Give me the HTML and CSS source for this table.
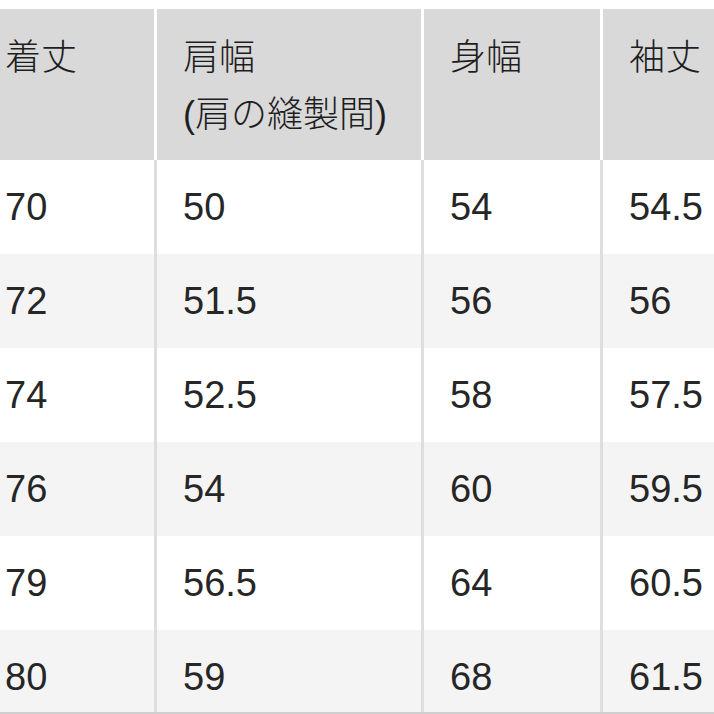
FILE: index.html
```html
<!DOCTYPE html>
<html lang="ja">
<head>
<meta charset="utf-8">
<link rel="stylesheet" href="styles.css">
</head>
<body>
<div class="sheet">
  <div class="row head">
    <div class="cell">着丈</div>
    <div class="cell">肩幅<br>(肩の縫製間)</div>
    <div class="cell">身幅</div>
    <div class="cell">袖丈</div>
  </div>
  <div class="row">
    <div class="cell">70</div><div class="cell">50</div><div class="cell">54</div><div class="cell">54.5</div>
  </div>
  <div class="row alt">
    <div class="cell">72</div><div class="cell">51.5</div><div class="cell">56</div><div class="cell">56</div>
  </div>
  <div class="row">
    <div class="cell">74</div><div class="cell">52.5</div><div class="cell">58</div><div class="cell">57.5</div>
  </div>
  <div class="row alt">
    <div class="cell">76</div><div class="cell">54</div><div class="cell">60</div><div class="cell">59.5</div>
  </div>
  <div class="row">
    <div class="cell">79</div><div class="cell">56.5</div><div class="cell">64</div><div class="cell">60.5</div>
  </div>
  <div class="row alt last">
    <div class="cell">80</div><div class="cell">59</div><div class="cell">68</div><div class="cell">61.5</div>
  </div>
</div>
</body>
</html>
```

FILE: styles.css
```css
html, body {
  margin: 0;
  padding: 0;
  background: #ffffff;
}
body {
  width: 714px;
  height: 714px;
  overflow: hidden;
  font-family: "Liberation Sans", "Noto Sans CJK JP", sans-serif;
  color: #262626;
}
.sheet {
  padding-top: 9px;
  width: 714px;
}
.row {
  display: grid;
  grid-template-columns: 154px 267px 179px 114px;
  height: 94px;
  background: #ffffff;
}
.row.alt {
  background: #f4f4f4;
}
.row.last {
  height: 82px;
  border-bottom: 2px solid #cfcfcf;
}
.cell {
  box-sizing: border-box;
  font-size: 38px;
  line-height: 46px;
  padding: 24px 0 0 26px;
  white-space: nowrap;
  overflow: hidden;
}
.row .cell:first-child {
  padding-left: 5px;
}
.row .cell + .cell {
  border-left: 3px solid #dedede;
}
.head {
  height: 151px;
  background: #ffffff;
}
.head .cell {
  background: #d9d9d9;
  font-size: 36px;
  font-weight: 300;
  line-height: 57px;
  padding-top: 20px;
  color: #1e1e1e;
}
.head .cell + .cell {
  border-left: 3px solid #ffffff;
}
```
